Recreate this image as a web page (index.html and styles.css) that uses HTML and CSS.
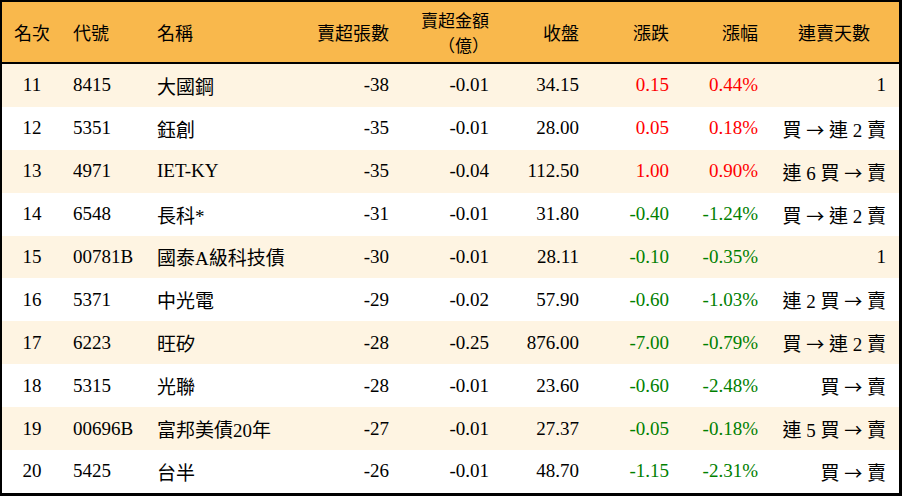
FILE: index.html
```html
<!DOCTYPE html>
<html lang="zh-Hant">
<head>
<meta charset="utf-8">
<title>賣超排行</title>
<link rel="stylesheet" href="styles.css">
</head>
<body>
<div class="board">
  <div class="row head">
    <div class="c center">名次</div>
    <div class="c left">代號</div>
    <div class="c left">名稱</div>
    <div class="c right">賣超張數</div>
    <div class="c right two">賣超金額<br>（億）</div>
    <div class="c right">收盤</div>
    <div class="c right">漲跌</div>
    <div class="c right">漲幅</div>
    <div class="c center last">連賣天數</div>
  </div>
  <div class="row odd">
    <div class="c center">11</div><div class="c left">8415</div><div class="c left">大國鋼</div>
    <div class="c right">-38</div><div class="c right">-0.01</div><div class="c right">34.15</div>
    <div class="c right up">0.15</div><div class="c right up">0.44%</div><div class="c right last">1</div>
  </div>
  <div class="row">
    <div class="c center">12</div><div class="c left">5351</div><div class="c left">鈺創</div>
    <div class="c right">-35</div><div class="c right">-0.01</div><div class="c right">28.00</div>
    <div class="c right up">0.05</div><div class="c right up">0.18%</div><div class="c right last">買 <span class="arr">→</span> 連 2 賣</div>
  </div>
  <div class="row odd">
    <div class="c center">13</div><div class="c left">4971</div><div class="c left">IET-KY</div>
    <div class="c right">-35</div><div class="c right">-0.04</div><div class="c right">112.50</div>
    <div class="c right up">1.00</div><div class="c right up">0.90%</div><div class="c right last">連 6 買 <span class="arr">→</span> 賣</div>
  </div>
  <div class="row">
    <div class="c center">14</div><div class="c left">6548</div><div class="c left">長科*</div>
    <div class="c right">-31</div><div class="c right">-0.01</div><div class="c right">31.80</div>
    <div class="c right down">-0.40</div><div class="c right down">-1.24%</div><div class="c right last">買 <span class="arr">→</span> 連 2 賣</div>
  </div>
  <div class="row odd">
    <div class="c center">15</div><div class="c left">00781B</div><div class="c left">國泰A級科技債</div>
    <div class="c right">-30</div><div class="c right">-0.01</div><div class="c right">28.11</div>
    <div class="c right down">-0.10</div><div class="c right down">-0.35%</div><div class="c right last">1</div>
  </div>
  <div class="row">
    <div class="c center">16</div><div class="c left">5371</div><div class="c left">中光電</div>
    <div class="c right">-29</div><div class="c right">-0.02</div><div class="c right">57.90</div>
    <div class="c right down">-0.60</div><div class="c right down">-1.03%</div><div class="c right last">連 2 買 <span class="arr">→</span> 賣</div>
  </div>
  <div class="row odd">
    <div class="c center">17</div><div class="c left">6223</div><div class="c left">旺矽</div>
    <div class="c right">-28</div><div class="c right">-0.25</div><div class="c right">876.00</div>
    <div class="c right down">-7.00</div><div class="c right down">-0.79%</div><div class="c right last">買 <span class="arr">→</span> 連 2 賣</div>
  </div>
  <div class="row">
    <div class="c center">18</div><div class="c left">5315</div><div class="c left">光聯</div>
    <div class="c right">-28</div><div class="c right">-0.01</div><div class="c right">23.60</div>
    <div class="c right down">-0.60</div><div class="c right down">-2.48%</div><div class="c right last">買 <span class="arr">→</span> 賣</div>
  </div>
  <div class="row odd">
    <div class="c center">19</div><div class="c left">00696B</div><div class="c left">富邦美債20年</div>
    <div class="c right">-27</div><div class="c right">-0.01</div><div class="c right">27.37</div>
    <div class="c right down">-0.05</div><div class="c right down">-0.18%</div><div class="c right last">連 5 買 <span class="arr">→</span> 賣</div>
  </div>
  <div class="row">
    <div class="c center">20</div><div class="c left">5425</div><div class="c left">台半</div>
    <div class="c right">-26</div><div class="c right">-0.01</div><div class="c right">48.70</div>
    <div class="c right down">-1.15</div><div class="c right down">-2.31%</div><div class="c right last">買 <span class="arr">→</span> 賣</div>
  </div>
</div>
</body>
</html>
```

FILE: styles.css
```css
html, body {
  margin: 0;
  padding: 0;
  background: #ffffff;
}

.board {
  width: 902px;
  height: 496px;
  box-sizing: border-box;
  border: 2px solid #000000;
  border-right-width: 3px;
  border-bottom-width: 3px;
  font-family: "Liberation Serif", "Noto Sans CJK TC", serif;
  font-size: 19px;
  color: #000000;
  display: flex;
  flex-direction: column;
}

.row {
  display: grid;
  grid-template-columns: 60px 84px 154px 100px 100px 90px 90px 89px 1fr;
  height: 43px;
  align-items: center;
  background: #ffffff;
}

.row.odd {
  background: #fef4e2;
}

.row.head {
  height: 60px;
  background: #f9b84c;
  border-bottom: 2px solid #000000;
  font-family: "Noto Sans CJK TC", sans-serif;
  font-size: 18px;
  line-height: 26px;
}

.c {
  white-space: nowrap;
}

.center {
  text-align: center;
}

.left {
  text-align: left;
  padding-left: 11px;
}

.right {
  text-align: right;
  padding-right: 11px;
}

.last.right {
  padding-right: 13px;
}

.two {
  font-size: 17px;
  line-height: 25px;
}

.arr {
  font-family: "Noto Sans CJK TC", sans-serif;
  font-size: 18px;
}

.up {
  color: #ff0000;
}

.down {
  color: #008000;
}
```
